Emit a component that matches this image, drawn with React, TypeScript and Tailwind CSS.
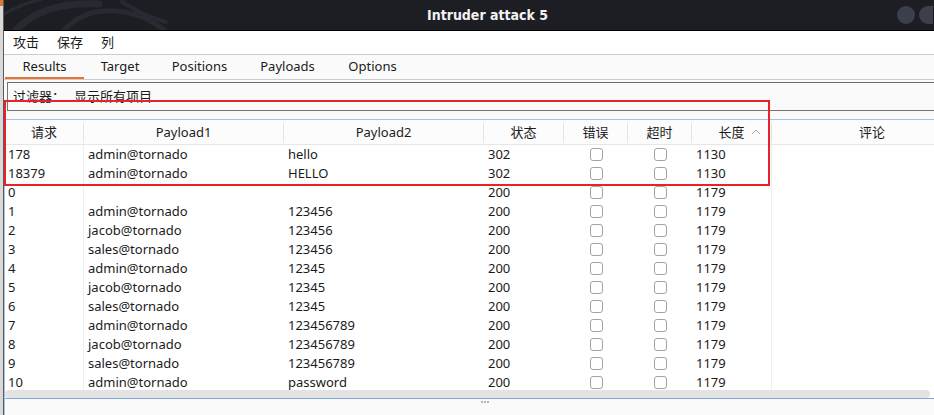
import React from 'react'

const ui = { fontFamily: '"Noto Sans", "Noto Sans CJK SC", sans-serif' }

const cols = 'grid grid-cols-[79px_200px_200px_80px_64px_64px_80px_200px]'

const rows: [string, string, string, string, string][] = [
  ['178', 'admin@tornado', 'hello', '302', '1130'],
  ['18379', 'admin@tornado', 'HELLO', '302', '1130'],
  ['0', '', '', '200', '1179'],
  ['1', 'admin@tornado', '123456', '200', '1179'],
  ['2', 'jacob@tornado', '123456', '200', '1179'],
  ['3', 'sales@tornado', '123456', '200', '1179'],
  ['4', 'admin@tornado', '12345', '200', '1179'],
  ['5', 'jacob@tornado', '12345', '200', '1179'],
  ['6', 'sales@tornado', '12345', '200', '1179'],
  ['7', 'admin@tornado', '123456789', '200', '1179'],
  ['8', 'jacob@tornado', '123456789', '200', '1179'],
  ['9', 'sales@tornado', '123456789', '200', '1179'],
  ['10', 'admin@tornado', 'password', '200', '1179'],
]

const tabs = [
  { label: 'Results', w: 'w-[79px]', active: true },
  { label: 'Target', w: 'w-[72px]' },
  { label: 'Positions', w: 'w-[87px]' },
  { label: 'Payloads', w: 'w-[89px]' },
  { label: 'Options', w: 'w-[81px]' },
]

function Check() {
  return (
    <div className="flex h-full items-center justify-center">
      <div className="h-[13px] w-[13px] rounded-[3px] border border-[#a3a3a3] bg-white" />
    </div>
  )
}

function HeadCell({ children, last }: { children: React.ReactNode; last?: boolean }) {
  return (
    <div className="flex h-full items-center justify-center py-[3px]">
      <div className={`flex h-full w-full items-center justify-center ${last ? '' : 'border-r border-[#e4e4e4]'}`}>
        {children}
      </div>
    </div>
  )
}

function Dragon() {
  return (
    <svg width="180" height="30" viewBox="0 0 180 30" className="shrink-0">
      <g fill="none" stroke="#292a31" strokeLinecap="round">
        <path d="M10 32 C 30 10, 60 2, 95 4" strokeWidth="7" />
        <path d="M60 30 C 75 14, 95 8, 120 12 C 135 14, 150 22, 160 30" strokeWidth="5" />
        <path d="M118 2 C 128 8, 140 16, 162 22" strokeWidth="4" />
        <path d="M0 14 C 14 6, 24 2, 36 0" strokeWidth="3" />
      </g>
    </svg>
  )
}

export default function App() {
  return (
    <div className="flex h-[415px] w-[934px] overflow-hidden bg-[#fafafa] text-[13px] text-[#1b1b1b]" style={ui}>
      <div className="flex w-[4px] shrink-0 flex-col border-r border-[#5a5a5a] bg-[#d9d9d9]">
        <div className="h-[6px] bg-[#e0763c]" />
      </div>

      <div className="flex min-w-0 flex-1 flex-col">
        {/* title bar */}
        <div className="relative flex h-[30px] shrink-0 items-center bg-[#1d1e24]">
          <Dragon />
          <div
            className="absolute left-[423px] top-0 flex h-full items-center text-[14px] font-bold text-[#f2f2f2]"
            style={{ fontFamily: '"DejaVu Sans Condensed", "DejaVu Sans", sans-serif', fontStretch: 'condensed' }}
          >
            Intruder attack 5
          </div>
          <div className="ml-auto flex gap-[4px] pr-[1px]">
            <div className="h-[18px] w-[18px] rounded-full bg-[#3c3f4c]" />
            <div className="h-[18px] w-[14px] rounded-l-full bg-[#3c3f4c]" />
          </div>
        </div>
        <div className="h-px shrink-0 bg-black" />

        {/* menu */}
        <div className="flex h-[23px] shrink-0 items-center bg-white pl-[9px]">
          {['攻击', '保存', '列'].map((m) => (
            <span key={m} className="mr-[18px]">
              {m}
            </span>
          ))}
        </div>
        <div className="h-px shrink-0 bg-[#cdcdcd]" />

        {/* tabs */}
        <div className="flex h-[24px] shrink-0 pl-[1px]">
          {tabs.map((t) => (
            <div
              key={t.label}
              className={`flex ${t.w} items-center justify-center pt-[1px] ${t.active ? 'border-b-2 border-[#e8722e]' : 'border-b-2 border-transparent'}`}
            >
              {t.label}
            </div>
          ))}
        </div>
        <div className="h-px shrink-0 bg-[#cdcdcd]" />
        <div className="h-[2px] shrink-0" />

        {/* filter */}
        <div className="ml-[3px] flex h-[29px] shrink-0 items-center border-y border-l border-[#747474] border-t-[#6a6a6a] pl-[5px]">
          <span>过滤器：</span>
          <span className="ml-[9px]">显示所有项目</span>
        </div>
        <div className="h-[8px] shrink-0" />

        {/* table */}
        <div className="flex min-h-0 flex-1 flex-col border-l border-[#a9c3e3]">
          <div className="h-px shrink-0 bg-[#a9c3e3]" />
          <div className={`${cols} h-[25px] shrink-0 border-b border-[#e6e6e6] bg-[#fcfcfc]`}>
            <HeadCell>请求</HeadCell>
            <HeadCell>Payload1</HeadCell>
            <HeadCell>Payload2</HeadCell>
            <HeadCell>状态</HeadCell>
            <HeadCell>错误</HeadCell>
            <HeadCell>超时</HeadCell>
            <HeadCell>
              <span className="relative">
                长度
                <svg width="10" height="6" viewBox="0 0 10 6" className="absolute left-[33px] top-[6px]">
                  <path d="M1 5 L5 1 L9 5" fill="none" stroke="#a8a8a8" strokeWidth="1" />
                </svg>
              </span>
            </HeadCell>
            <HeadCell last>评论</HeadCell>
          </div>

          <div className="min-h-0 flex-1 overflow-hidden bg-white">
            {rows.map((r) => (
              <div key={r[0]} className={`${cols} h-[19px]`}>
                <div className="flex items-center border-r border-[#efefef] pl-[3px]">{r[0]}</div>
                <div className="flex items-center pl-[4px]">{r[1]}</div>
                <div className="flex items-center pl-[4px]">{r[2]}</div>
                <div className="flex items-center pl-[4px]">{r[3]}</div>
                <Check />
                <Check />
                <div className="flex items-center border-r border-[#efefef] pl-[4px]">{r[4]}</div>
                <div />
              </div>
            ))}
          </div>

          <div className="flex h-[8px] shrink-0 bg-white pr-[4px]">
            <div className="h-full flex-1 rounded-[4px] bg-[#e3e3e3]" />
          </div>
          <div className="h-px shrink-0 bg-[#7fa9d8]" />
          <div className="flex h-[16px] shrink-0 bg-[#fafafa] pl-[476px] pt-[2px]">
            <div className="flex gap-[1px]">
              <div className="h-[2px] w-[2px] bg-[#b5b5b5]" />
              <div className="h-[2px] w-[2px] bg-[#b5b5b5]" />
              <div className="h-[2px] w-[2px] bg-[#b5b5b5]" />
            </div>
          </div>
        </div>
      </div>

      {/* red annotation box */}
      <div className="pointer-events-none absolute left-[4px] top-[100px] h-[86px] w-[766px] border-2 border-[#e8212b]" />
    </div>
  )
}
